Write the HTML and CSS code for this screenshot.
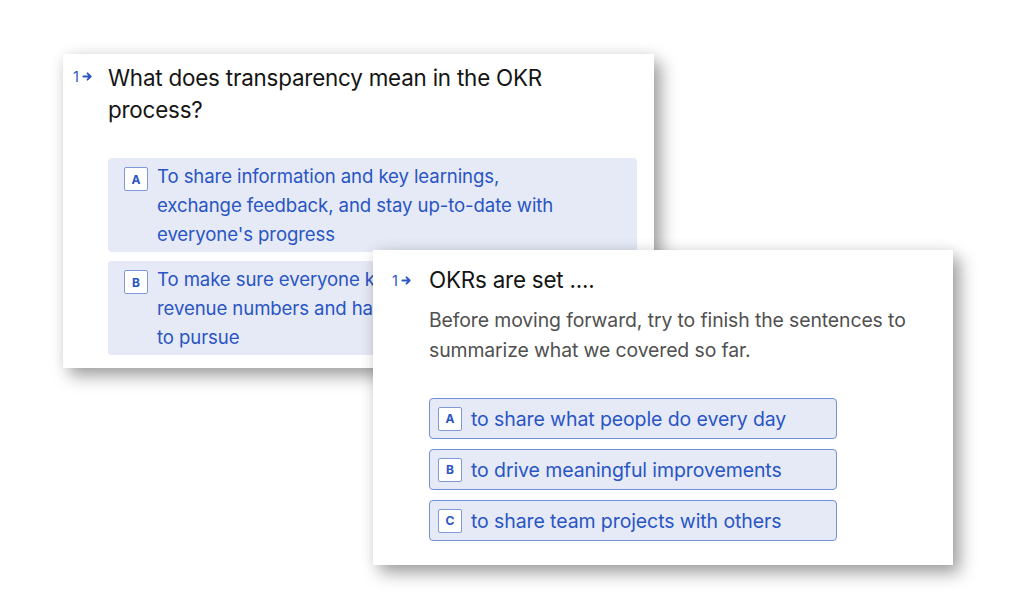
FILE: index.html
```html
<!DOCTYPE html>
<html>
  <head>
    <meta charset="utf-8" />
    <title>OKR Quiz</title>
    <link rel="stylesheet" href="styles.css">
  </head>
  <body>
    <div id="canvas">
      <!-- First question card, behind -->
      <div class="card card-back">
        <div class="question">
          <div class="qnum">1<svg class="arrow" viewBox="0 0 12 12"><path d="M1.5 6h8M6 2.5 9.5 6 6 9.5" /></svg></div>
          <div class="qbody">
            <h2 class="qtitle">What does transparency mean in the OKR process?</h2>
            <div class="choices filled">
              <div class="choice">
                <span class="key">A</span>
                <span class="label">To share information and key learnings, exchange feedback, and stay up-to-date with everyone's progress</span>
              </div>
              <div class="choice">
                <span class="key">B</span>
                <span class="label">To make sure everyone knows the<br>revenue numbers and has clear goals<br>to pursue</span>
              </div>
            </div>
          </div>
        </div>
      </div>

      <!-- Second question card, in front -->
      <div class="card card-front">
        <div class="question">
          <div class="qnum">1<svg class="arrow" viewBox="0 0 12 12"><path d="M1.5 6h8M6 2.5 9.5 6 6 9.5" /></svg></div>
          <div class="qbody">
            <h2 class="qtitle">OKRs are set ....</h2>
            <p class="qdesc">Before moving forward, try to finish the sentences to summarize what we covered so far.</p>
            <div class="choices outlined">
              <div class="choice">
                <span class="key">A</span>
                <span class="label">to share what people do every day</span>
              </div>
              <div class="choice">
                <span class="key">B</span>
                <span class="label">to drive meaningful improvements</span>
              </div>
              <div class="choice">
                <span class="key">C</span>
                <span class="label">to share team projects with others</span>
              </div>
            </div>
          </div>
        </div>
      </div>
    </div>
  </body>
</html>
```

FILE: styles.css
```css
/* Two overlapping quiz cards on a white page */
body {
  margin: 0;
  background: #fff;
  font-family: Inter, "Liberation Sans", Arial, sans-serif;
}
#canvas {
  position: relative;
  width: 1024px;
  height: 615px;
  overflow: hidden;
}
.card {
  position: absolute;
  background: #fff;
  box-shadow: 7px 8px 16px rgba(0, 0, 0, 0.36), 0 0 14px rgba(0, 0, 0, 0.07);
  box-sizing: border-box;
}
.card-back {
  left: 63px;
  top: 54px;
  width: 591px;
  height: 314px;
  padding: 8px 17px 0 10px;
}
.card-front {
  left: 373px;
  top: 250px;
  width: 580px;
  height: 315px;
  padding: 14px 17px 0 19px;
}
.question {
  display: flex;
}
.qnum {
  display: flex;
  align-items: center;
  gap: 3px;
  height: 32px;
  color: #2a55c4;
  font-size: 14.5px;
  flex-shrink: 0;
}
.card-back .qnum {
  width: 35px;
  height: 28px;
}
.card-front .qnum {
  width: 37px;
}
.arrow {
  width: 11px;
  height: 11px;
  fill: none;
  stroke: #2a55c4;
  stroke-width: 2;
  stroke-linecap: round;
  stroke-linejoin: round;
}
.qbody {
  flex: 1;
}
.qtitle {
  margin: 0;
  font-size: 22.4px;
  font-weight: 400;
  line-height: 32px;
  color: #151515;
  letter-spacing: -0.2px;
}
.card-back .qtitle {
  width: 470px;
}
.qdesc {
  margin: 9px 0 0;
  font-size: 19.4px;
  line-height: 30px;
  color: #505050;
  letter-spacing: -0.1px;
}
.choices {
  display: flex;
  flex-direction: column;
}
.choice {
  display: flex;
  align-items: flex-start;
  color: #2a55c4;
  font-size: 18.6px;
  letter-spacing: -0.1px;
}
.key {
  width: 24px;
  height: 24px;
  box-sizing: border-box;
  border: 1px solid #7f99d9;
  border-radius: 2px;
  background: #fff;
  display: flex;
  align-items: center;
  justify-content: center;
  font-size: 12px;
  font-weight: 700;
  letter-spacing: 0;
  flex-shrink: 0;
}
.filled {
  margin-top: 32px;
  gap: 9px;
}
.filled .choice {
  background: #e5eaf6;
  border-radius: 4px;
  padding: 4px 16px 5px;
  line-height: 29px;
  height: 94px;
  box-sizing: border-box;
}
.filled .label {
  max-width: 420px;
}
.filled .key {
  margin: 5px 9px 0 0;
}
.outlined {
  margin-top: 33px;
  gap: 10px;
  width: 408px;
}
.outlined .choice {
  height: 41px;
  box-sizing: border-box;
  background: #e5eaf6;
  border: 1px solid #7391d6;
  border-radius: 4px;
  padding: 0 8px;
  align-items: center;
  font-size: 19.5px;
}
.outlined .key {
  margin-right: 9px;
}
```
